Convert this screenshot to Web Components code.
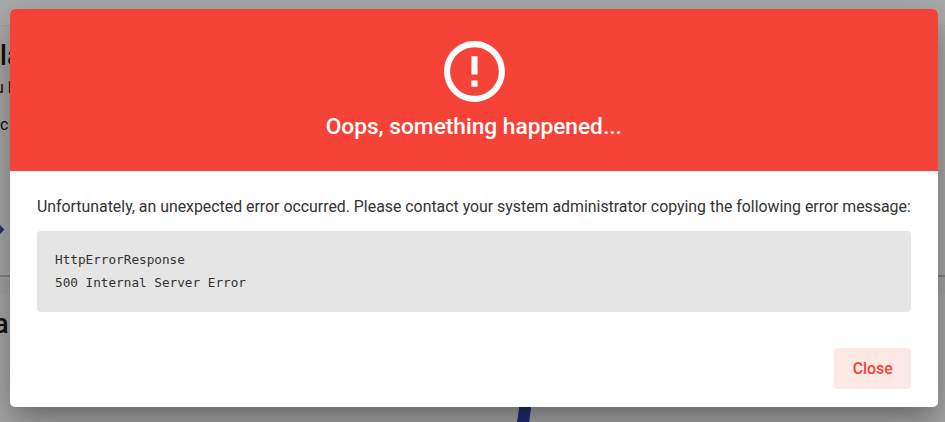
<!DOCTYPE html>
<html lang="en">
<head>
<meta charset="utf-8">
<title>Error dialog</title>
<style>
  html, body { margin: 0; width: 100%; height: 100%; overflow: hidden; }
  body { font-family: Roboto, "Liberation Sans", sans-serif; color: #333; }
</style>
</head>
<body>
<error-screen></error-screen>
<script>
function define(name, html) {
  customElements.define(name, class extends HTMLElement {
    constructor() {
      super();
      this.attachShadow({ mode: 'open' }).innerHTML = html;
    }
  });
}

define('page-backdrop', `
  <style>
    :host { display: block; height: 422px; background: #a9a9a9; color: #111; position: relative; overflow: hidden; }
    .bar { height: 26px; background: #abacac; box-sizing: border-box; border-bottom: 1px solid #a3a3a3; }
    .top { height: 251px; box-sizing: border-box; border-bottom: 2px solid #858585; background: #a9a9a9; }
    .strip { height: 17px; background: #a5a5a5; }
    span, i, svg { position: absolute; white-space: pre; line-height: 1; }
    .h { font-size: 27px; font-weight: 500; }
    .p { font-size: 16px; }
    i { width: 7px; height: 7px; left: -4.5px; top: 226px; background: #26317c; transform: rotate(45deg); }
  </style>
  <div class="bar"></div><div class="top"></div><div class="strip"></div>
  <span class="h" style="left:0;top:43px">la</span>
  <span class="p" style="left:-5px;top:80px">u l</span>
  <span class="p" style="left:0;top:117px">c</span>
  <span class="h" style="left:-6px;top:311px">a</span>
  <i></i>
  <svg style="left:500px;top:390px" width="50" height="32" viewBox="0 0 50 32"><path d="M25.5 8C25.5 19 24.5 25 22.5 35" fill="none" stroke="#202c78" stroke-width="12"/></svg>`);

define('alert-icon', `
  <style>:host { display: block; width: 74px; height: 73px; } svg { display: block; }</style>
  <svg width="74" height="73" viewBox="-.33 0 24.33 24" fill="#fff"><path d="M11 15h2v2h-2zm0-8h2v6h-2zm.99-5C6.47 2 2 6.48 2 12s4.47 10 9.99 10C17.52 22 22 17.52 22 12S17.52 2 11.99 2zM12 20c-4.42 0-8-3.58-8-8s3.58-8 8-8 8 3.58 8 8-3.58 8-8 8z"/></svg>`);

define('dialog-header', `
  <style>
    :host { display: flex; flex-direction: column; align-items: center; box-sizing: border-box; height: 162.5px; padding-top: 26.5px; background: #f54437; color: #fff; }
    h1 { margin: 5.5px 0 0; font-size: 22.7px; line-height: 26px; font-weight: 500; white-space: nowrap; }
  </style>
  <alert-icon></alert-icon>
  <h1><slot></slot></h1>`);

define('error-details', `
  <style>
    :host { display: block; box-sizing: border-box; height: 81px; margin-top: 13px; padding: 17px 18px; border-radius: 4px; background: #e5e5e5; }
    pre { margin: 0; font: 12.7px/23px "DejaVu Sans Mono", monospace; color: #333; }
  </style>
  <pre><slot></slot></pre>`);

define('soft-button', `
  <style>
    :host { display: block; }
    button { display: block; width: 76.5px; height: 41px; padding: 0 0 0 1px; border: 0; border-radius: 4px; background: #fee8e6; color: #f44336; font: 500 15.9px/41px Roboto, sans-serif; }
  </style>
  <button><slot></slot></button>`);

define('error-dialog', `
  <style>
    :host { display: flex; flex-direction: column; box-sizing: border-box; width: 928.5px; height: 398.5px; border-radius: 5px; overflow: hidden; background: #fff;
      box-shadow: 0 12px 17px -8px rgba(0,0,0,.2), 0 27px 43px 3px rgba(0,0,0,.14), 0 10px 52px 9px rgba(0,0,0,.12); }
    .body { padding: 25px 27.5px 0; }
    p { margin: 0; font-size: 15.87px; line-height: 22px; white-space: nowrap; }
    footer { display: flex; justify-content: flex-end; padding: 36.2px 27.5px 0; }
  </style>
  <dialog-header>Oops, something happened...</dialog-header>
  <div class="body">
    <p>Unfortunately, an unexpected error occurred. Please contact your system administrator copying the following error message:</p>
    <error-details>HttpErrorResponse\n500 Internal Server Error</error-details>
  </div>
  <footer><soft-button>Close</soft-button></footer>`);

define('error-screen', `
  <style>
    :host { display: block; position: relative; width: 945px; height: 422px; overflow: hidden; }
    error-dialog { position: absolute; left: 9.5px; top: 8.5px; }
  </style>
  <page-backdrop></page-backdrop>
  <error-dialog></error-dialog>`);
</script>
</body>
</html>
